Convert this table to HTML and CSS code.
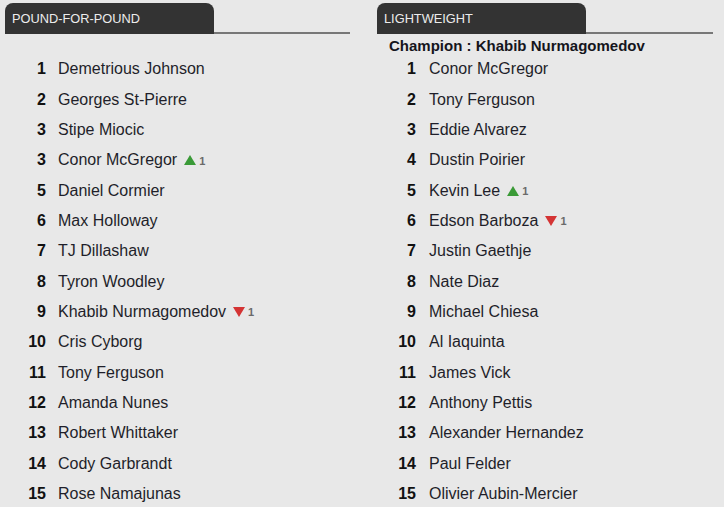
FILE: index.html
```html
<!DOCTYPE html>
<html>
<head>
<meta charset="utf-8">
<link rel="stylesheet" href="styles.css">
</head>
<body>
<div class="page">
  <section class="col col-left">
    <div class="head"><div class="tab">POUND-FOR-POUND</div><div class="rule"></div></div>
    <div class="sub"></div>
    <ol class="list">
      <li class="row"><span class="num">1</span><span class="name">Demetrious Johnson</span></li>
      <li class="row"><span class="num">2</span><span class="name">Georges St-Pierre</span></li>
      <li class="row"><span class="num">3</span><span class="name">Stipe Miocic</span></li>
      <li class="row"><span class="num">3</span><span class="name">Conor McGregor</span><span class="chg"><svg class="tri" viewBox="0 0 12 10"><polygon points="6,0 12,10 0,10" fill="#3a9a37"/></svg><span class="cnum">1</span></span></li>
      <li class="row"><span class="num">5</span><span class="name">Daniel Cormier</span></li>
      <li class="row"><span class="num">6</span><span class="name">Max Holloway</span></li>
      <li class="row"><span class="num">7</span><span class="name">TJ Dillashaw</span></li>
      <li class="row"><span class="num">8</span><span class="name">Tyron Woodley</span></li>
      <li class="row"><span class="num">9</span><span class="name">Khabib Nurmagomedov</span><span class="chg"><svg class="tri" viewBox="0 0 12 10"><polygon points="0,0 12,0 6,10" fill="#d43434"/></svg><span class="cnum">1</span></span></li>
      <li class="row"><span class="num">10</span><span class="name">Cris Cyborg</span></li>
      <li class="row"><span class="num">11</span><span class="name">Tony Ferguson</span></li>
      <li class="row"><span class="num">12</span><span class="name">Amanda Nunes</span></li>
      <li class="row"><span class="num">13</span><span class="name">Robert Whittaker</span></li>
      <li class="row"><span class="num">14</span><span class="name">Cody Garbrandt</span></li>
      <li class="row"><span class="num">15</span><span class="name">Rose Namajunas</span></li>
    </ol>
  </section>
  <section class="col col-right">
    <div class="head"><div class="tab">LIGHTWEIGHT</div><div class="rule"></div></div>
    <div class="sub">Champion : Khabib Nurmagomedov</div>
    <ol class="list">
      <li class="row"><span class="num">1</span><span class="name">Conor McGregor</span></li>
      <li class="row"><span class="num">2</span><span class="name">Tony Ferguson</span></li>
      <li class="row"><span class="num">3</span><span class="name">Eddie Alvarez</span></li>
      <li class="row"><span class="num">4</span><span class="name">Dustin Poirier</span></li>
      <li class="row"><span class="num">5</span><span class="name">Kevin Lee</span><span class="chg"><svg class="tri" viewBox="0 0 12 10"><polygon points="6,0 12,10 0,10" fill="#3a9a37"/></svg><span class="cnum">1</span></span></li>
      <li class="row"><span class="num">6</span><span class="name">Edson Barboza</span><span class="chg"><svg class="tri" viewBox="0 0 12 10"><polygon points="0,0 12,0 6,10" fill="#d43434"/></svg><span class="cnum">1</span></span></li>
      <li class="row"><span class="num">7</span><span class="name">Justin Gaethje</span></li>
      <li class="row"><span class="num">8</span><span class="name">Nate Diaz</span></li>
      <li class="row"><span class="num">9</span><span class="name">Michael Chiesa</span></li>
      <li class="row"><span class="num">10</span><span class="name">Al Iaquinta</span></li>
      <li class="row"><span class="num">11</span><span class="name">James Vick</span></li>
      <li class="row"><span class="num">12</span><span class="name">Anthony Pettis</span></li>
      <li class="row"><span class="num">13</span><span class="name">Alexander Hernandez</span></li>
      <li class="row"><span class="num">14</span><span class="name">Paul Felder</span></li>
      <li class="row"><span class="num">15</span><span class="name">Olivier Aubin-Mercier</span></li>
    </ol>
  </section>
</div>
</body>
</html>
```
FILE: styles.css
```css
html, body {
  margin: 0;
  padding: 0;
  background: #e8e8e8;
}
body {
  font-family: "Liberation Sans", Arial, sans-serif;
  color: #1f1f24;
  overflow: hidden;
}
.page {
  display: flex;
  gap: 27px;
  padding: 3px 0 0 5px;
}
.col-left { width: 345px; }
.col-right { width: 336px; }
.head {
  display: flex;
  height: 31px;
}
.tab {
  width: 202px;
  padding-left: 7px;
  background: #333333;
  border-radius: 8px 8px 0 0;
  color: #ececec;
  font-size: 12.8px;
  line-height: 32px;
}
.rule {
  flex: 1;
  border-bottom: 2px solid #777;
  box-sizing: border-box;
}
.sub {
  height: 20px;
  line-height: 24px;
  padding-left: 12px;
  font-weight: bold;
  font-size: 15px;
  color: #15151c;
  white-space: nowrap;
}
.list {
  list-style: none;
  margin: 0;
  padding: 0;
}
.row {
  display: flex;
  align-items: center;
  height: 30.35px;
}
.num {
  width: 41px;
  text-align: right;
  font-weight: bold;
  font-size: 16px;
  color: #111;
}
.col-right .num { width: 39px; }
.name {
  margin-left: 12px;
  font-size: 16px;
  color: #1f1f2a;
}
.col-right .name { margin-left: 13px; }
.chg {
  display: flex;
  align-items: center;
  margin-left: 7px;
}
.tri {
  width: 12px;
  height: 10px;
  display: block;
}
.cnum {
  margin-left: 3px;
  font-size: 11px;
  font-weight: bold;
  color: #6a6a6a;
  line-height: 1;
  padding-top: 2px;
}
```
